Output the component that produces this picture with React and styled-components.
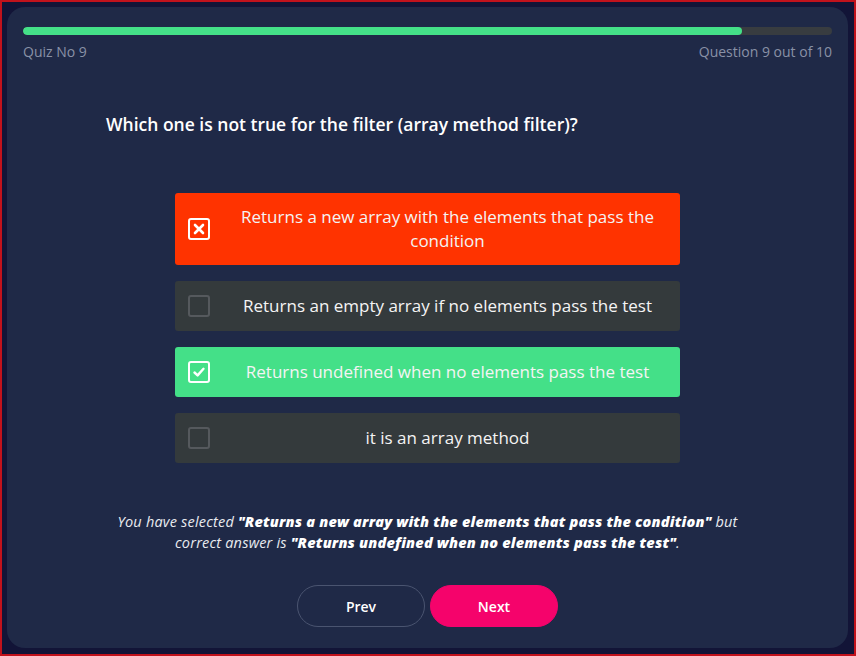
import React from 'react'
import styled, { createGlobalStyle } from 'styled-components'

const GlobalStyle = createGlobalStyle`
  * { box-sizing: border-box; }
  html, body { margin: 0; padding: 0; background: #121437; }
  body { font-family: "Open Sans", "Liberation Sans", sans-serif; }
`;

const options = [
  { text: 'Returns a new array with the elements that pass the condition', state: 'wrong' },
  { text: 'Returns an empty array if no elements pass the test', state: 'idle' },
  { text: 'Returns undefined when no elements pass the test', state: 'right' },
  { text: 'it is an array method', state: 'idle' },
];

const CheckIcon = ({ state }) => (
  <Box state={state}>
    {state === 'wrong' && (
      <svg width="14" height="14" viewBox="0 0 14 14">
        <path d="M3 3 L11 11 M11 3 L3 11" stroke="#fff" strokeWidth="2.6" strokeLinecap="round" />
      </svg>
    )}
    {state === 'right' && (
      <svg width="14" height="14" viewBox="0 0 14 14">
        <path d="M2.5 7.5 L5.6 10.4 L11.5 3.8" stroke="#fff" strokeWidth="2.4" fill="none" strokeLinecap="round" strokeLinejoin="round" />
      </svg>
    )}
  </Box>
);

const App = () => {
  return (
    <Frame>
      <GlobalStyle />
      <Card>
        <Track>
          <Fill style={{ width: `${(9 / 10) * 100 - 1.1}%` }} />
        </Track>
        <Meta>
          <span>Quiz No 9</span>
          <span>Question 9 out of 10</span>
        </Meta>
        <Body>
          <Question>Which one is not true for the filter (array method filter)?</Question>
          <Options>
            {options.map((o) => (
              <Option key={o.text} state={o.state}>
                <CheckIcon state={o.state} />
                <OptionText>{o.text}</OptionText>
              </Option>
            ))}
          </Options>
          <Feedback>
            You have selected <b>"Returns a new array with the elements that pass the condition"</b> but<br />
            correct answer is <b>"Returns undefined when no elements pass the test"</b>.
          </Feedback>
          <Buttons>
            <Button>Prev</Button>
            <Button primary>Next</Button>
          </Buttons>
        </Body>
      </Card>
    </Frame>
  )
}

export default App

const Frame = styled.div`
  width: 856px;
  height: 656px;
  border: 2px solid #c1121c;
  background: #121437;
  padding: 5px 6px 6px 5px;
`;

const Card = styled.div`
  height: 100%;
  background: #1f2947;
  border-radius: 18px;
  padding: 20px 16px;
  display: flex;
  flex-direction: column;
`;

const Track = styled.div`
  height: 8px;
  border-radius: 4px;
  background: #383c40;
  overflow: hidden;
`;

const Fill = styled.div`
  height: 100%;
  border-radius: 4px;
  background: #44e088;
`;

const Meta = styled.div`
  display: flex;
  justify-content: space-between;
  margin-top: 7px;
  font-size: 14px;
  line-height: 20px;
  color: #8991a6;
`;

const Body = styled.div`
  width: 645px;
  margin: 0 auto;
  display: flex;
  flex-direction: column;
  align-items: center;
`;

const Question = styled.div`
  align-self: flex-start;
  margin-top: 50px;
  padding-left: 1px;
  font-size: 17.5px;
  line-height: 24px;
  font-weight: 600;
  color: #fff;
`;

const Options = styled.div`
  margin-top: 57px;
  width: 505px;
  display: flex;
  flex-direction: column;
  gap: 16px;
`;

const optionBg = { wrong: '#ff3300', right: '#44e088', idle: '#343a3c' };

const Option = styled.div`
  display: flex;
  align-items: center;
  gap: 12px;
  min-height: 50px;
  padding: 12px 7px 12px 13px;
  border-radius: 3px;
  background: ${(p) => optionBg[p.state]};
`;

const Box = styled.div`
  flex: none;
  width: 22px;
  height: 22px;
  border-radius: 3px;
  border: 2px solid ${(p) => (p.state === 'idle' ? '#55595d' : '#fff')};
  display: flex;
  align-items: center;
  justify-content: center;
`;

const OptionText = styled.div`
  flex: 1;
  text-align: center;
  font-size: 17px;
  line-height: 24px;
  color: #f4f4f4;
  padding: 0 6px;
`;

const Feedback = styled.div`
  margin-top: 48px;
  text-align: center;
  font-style: italic;
  font-size: 14.5px;
  letter-spacing: 0.2px;
  line-height: 21px;
  color: #e9ebf0;

  b { font-weight: 800; color: #fff; }
`;

const Buttons = styled.div`
  margin-top: 32px;
  display: flex;
  gap: 5px;
`;

const Button = styled.button`
  width: 128px;
  height: 42px;
  border-radius: 21px;
  font-family: inherit;
  font-size: 14px;
  font-weight: 600;
  color: #fff;
  cursor: pointer;
  background: ${(p) => (p.primary ? '#f5036b' : 'transparent')};
  border: 1px solid ${(p) => (p.primary ? '#f5036b' : '#4a5470')};
`;
